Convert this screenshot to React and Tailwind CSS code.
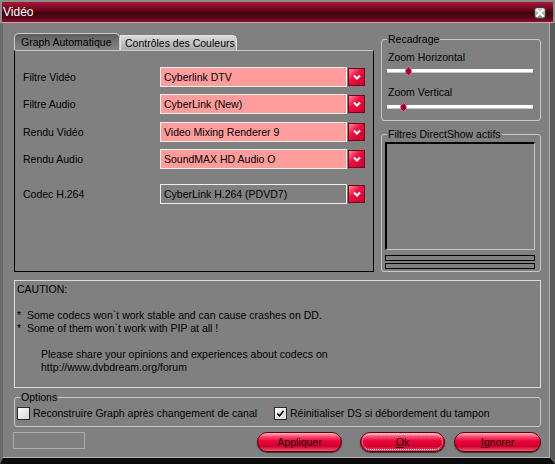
import React from "react";

function CloseBtn() {
  return (
    <div className="w-[12px] h-[12px] rounded-[3px] border border-[#3a3a3a] bg-[linear-gradient(to_bottom,#d0d0d0,#8a8a8a)] flex items-center justify-center mt-[1px]">
      <svg width="8" height="8" viewBox="0 0 8 8">
        <path d="M1 1 L7 7 M7 1 L1 7" stroke="#ffffff" strokeWidth="2" strokeLinecap="square" />
      </svg>
    </div>
  );
}

function Arrow() {
  return (
    <div className="w-[17px] h-[18px] ml-[1px] self-center border border-[#7a0018] bg-[linear-gradient(135deg,#ff8a9c_0%,#ec1442_40%,#c8002e_100%)] flex items-center justify-center">
      <svg width="8" height="6" viewBox="0 0 8 6">
        <path d="M1 1.5 L4 4.5 L7 1.5" stroke="#ffffff" strokeWidth="2" fill="none" />
      </svg>
    </div>
  );
}

function Row({ label, value, pink, className }) {
  return (
    <div className={"flex items-center h-[20px] " + className}>
      <div className="w-[137px]">{label}</div>
      <div className="flex h-[20px] w-[205px]">
        <div
          className={
            pink
              ? "flex-1 flex items-center pl-[3px] border border-[#eeeeee] bg-[#ff9c9c] whitespace-nowrap overflow-hidden"
              : "flex-1 flex items-center pl-[3px] border border-[#eeeeee] bg-[#808080] whitespace-nowrap overflow-hidden"
          }
        >
          {value}
        </div>
        <Arrow />
      </div>
    </div>
  );
}

function Thumb() {
  return (
    <svg width="7" height="10" viewBox="0 0 7 10">
      <path d="M3.5 0.5 L6.5 4 L6.5 7 L3.5 9.5 L0.5 7 L0.5 4 Z" fill="#9a0030" stroke="#e87a96" strokeWidth="1" />
    </svg>
  );
}

function Slider({ left, className }) {
  return (
    <div className={"relative h-[4px] w-[146px] bg-white border-b border-b-[#c8c8c8] " + className}>
      <div className="absolute top-[-3px]" style={{ left }}>
        <Thumb />
      </div>
    </div>
  );
}

function Check({ checked }) {
  return (
    <div className="w-[13px] h-[13px] shrink-0 border border-[#2a2a2a] bg-[linear-gradient(135deg,#ffffff,#d4d4d4)] flex items-center justify-center">
      {checked && (
        <svg width="9" height="9" viewBox="0 0 10 10">
          <path d="M1.5 5 L4 7.5 L8.5 2" stroke="#000000" strokeWidth="1.8" fill="none" />
        </svg>
      )}
    </div>
  );
}

function Btn({ children, className, focus }) {
  return (
    <div
      className={
        "h-[20px] rounded-full border border-[#5a0014] bg-[linear-gradient(to_bottom,#ffb4c0_0%,#ff5473_18%,#e8023a_45%,#d0002e_75%,#f2566f_100%)] shadow-[0_1px_1px_rgba(0,0,0,0.6)] flex items-center justify-center text-[#1a0005] " +
        (focus ? "outline-1 outline-dotted outline-offset-[-3px] outline-[#ffd4dc] " : "") +
        className
      }
    >
      {children}
    </div>
  );
}

export default function App() {
  return (
    <div className="w-[555px] h-[464px] bg-[#808080] flex flex-col overflow-hidden font-['Liberation_Sans',Arial,sans-serif] text-[10.5px] leading-[13px] text-black select-none">
      <div className="h-[23px] shrink-0 flex items-center justify-between border-t-2 border-t-[#8c8c8c] border-b border-b-[#d9a3b1] border-x-2 border-x-[#8c8c8c] bg-[linear-gradient(to_bottom,#a8183a_0%,#7c0a24_30%,#3e0410_55%,#5c0818_80%,#861228_100%)] pl-[1px] pr-[7px]">
        <span className="text-white text-[12px] leading-[14px]">Vidéo</span>
        <CloseBtn />
      </div>

      <div className="flex-1 flex flex-col border-l-[3px] border-l-[#6a6a6a] border-r-[5px] border-r-[#5a5a5a] border-b-[6px] border-b-[#0a0a0a] shadow-[inset_-1px_0_0_#b0b0b0,inset_0_-1px_0_#b8b8b8] pl-[11px] pr-[9px] pt-[10px]">
        <div className="flex h-[239px] shrink-0">
          <div className="w-[360px] flex flex-col">
            <div className="flex items-end h-[17px]">
              <div className="h-[17px] w-[106px] rounded-t-[5px] border border-b-0 border-[#cccccc] bg-[linear-gradient(to_bottom,#5c5c5c_0%,#767676_55%,#828282_100%)] flex items-center pl-[6px] whitespace-nowrap">
                Graph Automatique
              </div>
              <div className="h-[15px] w-[117px] rounded-tr-[5px] border border-b-0 border-[#e2e2e2] bg-[linear-gradient(to_bottom,#dadada,#a9a9a9)] flex items-center pl-[4px] whitespace-nowrap overflow-hidden">
                Contrôles des Couleurs
              </div>
            </div>
            <div className="flex-1 border border-black border-t-[#c8c8c8] pt-[16px] pl-[8px]">
              <Row label="Filtre Vidéo" value="Cyberlink DTV" pink className="" />
              <Row label="Filtre Audio" value="CyberLink (New)" pink className="mt-[7px]" />
              <Row label="Rendu Vidéo" value="Video Mixing Renderer 9" pink className="mt-[8px]" />
              <Row label="Rendu Audio" value="SoundMAX HD Audio O" pink className="mt-[7px]" />
              <Row label="Codec H.264" value="CyberLink H.264 (PDVD7)" className="mt-[15px]" />
            </div>
          </div>

          <div className="w-[160px] ml-[7px] flex flex-col pt-[6px]">
            <div className="relative h-[82px] border border-[#c8c8c8] rounded-[3px] pt-[11px] pl-[5px]">
              <span className="absolute top-[-7px] left-[5px] bg-[#808080] px-[1px] whitespace-nowrap">Recadrage</span>
              <div className="ml-[1px]">Zoom Horizontal</div>
              <Slider left={18} className="mt-[5px]" />
              <div className="ml-[1px] mt-[13px]">Zoom Vertical</div>
              <Slider left={13} className="mt-[6px]" />
            </div>
            <div className="relative mt-[13px] h-[138px] border border-[#c8c8c8] rounded-[3px] pt-[7px] pl-[3px] pr-[5px]">
              <span className="absolute top-[-7px] left-[5px] bg-[#808080] px-[1px] whitespace-nowrap">Filtres DirectShow actifs</span>
              <div className="h-[108px] border-t-2 border-l-2 border-r border-b border-t-black border-l-black border-r-[#c8c8c8] border-b-[#c8c8c8]" />
              <div className="mt-[5px] h-[6px] border border-black" />
              <div className="mt-[2px] h-[6px] border border-black" />
            </div>
          </div>
        </div>

        <div className="mt-[8px] h-[108px] shrink-0 border border-[#dadada] pl-[2px] pt-[2px]">
          <div>CAUTION:</div>
          <div className="h-[13px]" />
          <div className="flex">
            <span className="w-[10px]">*</span>
            <span>Some codecs won`t work stable and can cause crashes on DD.</span>
          </div>
          <div className="flex">
            <span className="w-[10px]">*</span>
            <span>Some of them won`t work with PIP at all !</span>
          </div>
          <div className="h-[13px]" />
          <div className="ml-[24px]">Please share your opinions and experiences about codecs on</div>
          <div className="ml-[24px]">http://www.dvbdream.org/forum</div>
        </div>

        <div className="relative mt-[9px] h-[30px] shrink-0 border border-[#c8c8c8] rounded-[3px] flex items-center pl-[2px] pt-[2px]">
          <span className="absolute top-[-7px] left-[5px] bg-[#808080] px-[1px]">Options</span>
          <div className="flex items-center w-[257px]">
            <Check />
            <span className="ml-[3px] whitespace-nowrap">Reconstruire Graph après changement de canal</span>
          </div>
          <div className="flex items-center">
            <Check checked />
            <span className="ml-[3px] whitespace-nowrap">Réinitialiser DS si débordement du tampon</span>
          </div>
        </div>

        <div className="mt-[5px] flex items-start shrink-0">
          <div className="w-[72px] h-[17px] -ml-[1px] border border-[#ababab]" />
          <Btn className="w-[85px] ml-[172px]">Appliquer</Btn>
          <Btn className="w-[85px] ml-[18px]" focus>
            <span className="underline">O</span>k
          </Btn>
          <Btn className="w-[87px] ml-[9px]">
            <span className="underline">I</span>gnorer
          </Btn>
        </div>
      </div>
    </div>
  );
}
